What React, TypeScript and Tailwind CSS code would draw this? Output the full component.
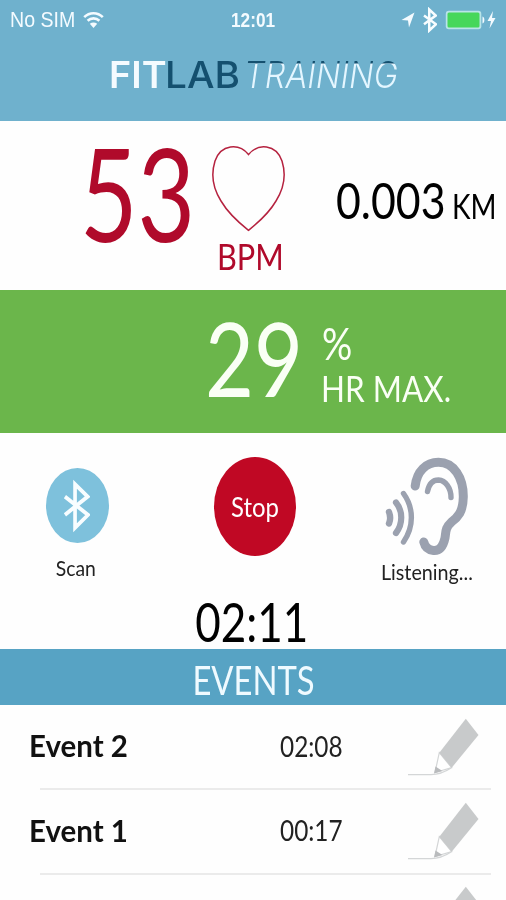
import React from 'react';

interface EventItem {
  name: string;
  time: string;
}

const events: EventItem[] = [
  { name: 'Event 2', time: '02:08' },
  { name: 'Event 1', time: '00:17' },
];

const WifiIcon = () => (
  <svg className="w-[21px] h-[18px]" viewBox="0 0 21 18" fill="none" stroke="#f4fbff" strokeWidth="2.6">
    <path d="M1.2 6.2C6.4 1 14.6 1 19.8 6.2" />
    <path d="M4.6 9.8C8 6.6 13 6.6 16.4 9.8" />
    <path d="M10.5 17L6.8 12.8C9 11 12 11 14.2 12.8Z" fill="#f4fbff" stroke="none" />
  </svg>
);

const LocationIcon = () => (
  <svg className="w-[14px] h-[16px]" viewBox="0 0 14 16" fill="#f4fbff">
    <path d="M13.5 0.5L8 15.5L7 8.6L0.5 8Z" />
  </svg>
);

const BluetoothIcon = ({ className }: { className: string }) => (
  <svg className={className} viewBox="0 0 28 52" fill="none" stroke="#f8fdff" preserveAspectRatio="none">
    <path d="M2 17L26 34.5L12.5 47V5L25.5 17L2 34.5" />
  </svg>
);

const BatteryIcon = () => (
  <svg className="w-[51px] h-[20px]" viewBox="0 0 51 20">
    <rect x="0.8" y="0.8" width="35.5" height="18.4" rx="3" fill="#b9e4e8" />
    <rect x="2.5" y="2.5" width="32" height="15" rx="1.5" fill="#46d75b" />
    <path d="M37.5 6.5C40 7 40 13 37.5 13.5Z" fill="#f4fbff" />
    <path d="M48 1L42.5 11H46L44.5 18.5L50.5 8H47Z" fill="#f4fbff" />
  </svg>
);

const HeartIcon = () => (
  <svg className="w-[76px] h-[88px]" viewBox="211 144 76 88" fill="none" stroke="#b5223f" strokeWidth="1.5">
    <path d="M248.5 154.5C239 143 221 144 215 161C210 177 214 190 221 201C228 213 238 222 248.5 230.3C259 222 269 213 276 201C283 190 287 177 282 161C276 144 258 143 248.5 154.5Z" />
  </svg>
);

const EarIcon = () => (
  <svg className="w-[88px] h-[102px]" viewBox="384 456 88 102" fill="none" stroke="#9ba1af" strokeLinecap="round">
    <path strokeWidth="9" d="M416.2 486C418 471 427 462.5 439.5 462.3C455 462.3 464.5 478 464.3 497C464 512 459 517 452.5 522C446 528 447 532 446 538C444 547 440 551 434.5 550.5C429 550 426 547 424.8 542" />
    <path strokeWidth="5.4" d="M428.5 491.5C430 484 434 480 439.5 480C446.5 480.5 452 488 452 497.5" />
    <path strokeWidth="6.4" d="M390 512C391.5 516 391.5 520 390 523.5" />
    <path strokeWidth="6.2" d="M397 502.5C404 511 404 524 397 533" />
    <path strokeWidth="5.4" d="M404.5 493.5C415 508 415 527 404.5 542" />
  </svg>
);

const PencilIcon = () => (
  <svg className="w-[74px] h-[60px]" viewBox="406 716 74 60">
    <path d="M439.3 751.7L435 771.5L451.7 766.7Z" fill="#fff" stroke="#d4d6d7" strokeWidth="1.2" />
    <path d="M465.8 717.7L478.5 734L451.7 766.7L439.3 751.7Z" fill="#c8cacb" />
    <path d="M435.5 765.5L442.5 770L434 772.5Z" fill="#b9bbbd" />
    <path d="M408 773.6H431C438 773.6 445 771 451 767" fill="none" stroke="#d4d6d7" strokeWidth="1.4" />
  </svg>
);

const Header = () => (
  <header className="h-[121px] bg-[#6fb1cd] text-[#f4fbff]">
    <div className="flex h-10 items-center font-['Liberation_Sans',sans-serif]">
      <div className="ml-[10px] w-[73px]">
        <span className="inline-block origin-left scale-x-[0.89] whitespace-nowrap text-[22px] leading-10">No SIM</span>
      </div>
      <WifiIcon />
      <div className="ml-[127px] w-[44px]">
        <span className="inline-block origin-left scale-x-[0.82] whitespace-nowrap text-[21px] font-bold leading-10">12:01</span>
      </div>
      <div className="ml-[126px] flex items-center">
        <LocationIcon />
        <BluetoothIcon className="ml-[8px] h-[26px] w-[14px] stroke-[5]" />
        <span className="ml-[8px]"><BatteryIcon /></span>
      </div>
    </div>
    <h1 className="ml-[109px] mt-[16px] flex font-['Inter',sans-serif] text-[37px] leading-[37px]">
      <span className="w-[56px]">
        <span className="inline-block origin-left scale-x-[1.02] font-semibold">FIT</span>
      </span>
      <span className="w-[79px] text-[#14506f]">
        <span className="inline-block origin-left scale-x-[1.05] font-medium">LAB</span>
      </span>
      <span className="w-[152px]">
        <span className="inline-block origin-left scale-x-[0.88] bg-linear-to-b from-[#14506f] from-[7px] to-[#e4f6ff] to-[8px] bg-clip-text font-light italic text-transparent">TRAINING</span>
      </span>
    </h1>
  </header>
);

const HeartRate = () => (
  <section className="flex h-[169px]">
    <div className="ml-[80px] w-[131px] pt-[7px] text-[#b00a2b]">
      <span className="inline-block origin-left scale-x-[0.77] text-[129px] leading-none">53</span>
    </div>
    <div className="flex w-[76px] flex-col pt-[23px] text-[#b00a2b]">
      <HeartIcon />
      <span className="ml-[6px] mt-[5px] inline-block origin-left scale-x-[0.83] text-[37px] leading-none">BPM</span>
    </div>
    <div className="ml-[49px] flex items-baseline pt-[53px] text-black">
      <div className="w-[116px]">
        <span className="inline-block origin-left scale-x-[0.84] text-[51px] leading-none">0.003</span>
      </div>
      <span className="inline-block origin-left scale-x-[0.8] text-[35px] leading-none">KM</span>
    </div>
  </section>
);

const MaxRate = () => (
  <section className="flex h-[143px] bg-[#6bb64b] text-[#fafff5]">
    <div className="ml-[205px] w-[116px] pt-[16px]">
      <span className="inline-block origin-left scale-x-[0.82] text-[103px] leading-none">29</span>
    </div>
    <div className="flex flex-col items-start pt-[31px]">
      <span className="ml-px origin-left scale-x-[0.84] text-[45px] leading-none">%</span>
      <span className="mt-[3px] origin-left scale-x-[0.85] whitespace-nowrap text-[37px] leading-none">HR MAX.</span>
    </div>
  </section>
);

const Controls = () => (
  <section className="h-[216px] pt-[23px] text-[#222]">
    <div className="flex h-[137px]">
      <div className="ml-[46px] flex w-[63px] flex-col items-center pt-[12px]">
        <button className="flex h-[75px] w-[63px] items-center justify-center rounded-[50%] bg-[#7ec1dc]">
          <BluetoothIcon className="mr-[3px] h-[54px] w-[27px] stroke-[3.8]" />
        </button>
        <span className="mr-[3px] mt-[14px] scale-x-[0.88] text-[22px] leading-none">Scan</span>
      </div>
      <button className="ml-[105px] mt-px flex h-[99px] w-[82px] items-center justify-center rounded-[50%] bg-[#c00824] text-white">
        <span className="scale-x-[0.92] text-[26px] leading-none">Stop</span>
      </button>
      <div className="ml-[84px] flex w-[94px] flex-col items-center">
        <EarIcon />
        <span className="mt-[3px] scale-x-[0.94] text-[21px] leading-none">Listening...</span>
      </div>
    </div>
    <div className="flex justify-center pr-[2px] text-black">
      <span className="scale-x-[0.8] text-[55px] leading-[57px]">02:11</span>
    </div>
  </section>
);

const EventRow: React.FC<EventItem> = ({ name, time }) => (
  <li className="h-[84.5px]">
    <div className="flex h-[83px] items-center">
      <div className="ml-[29px] w-[251px]">
        <span className="inline-block origin-left scale-x-[0.95] text-[31px] font-bold leading-none text-[#111]">{name}</span>
      </div>
      <div className="w-[126px]">
        <span className="inline-block origin-left scale-x-[0.84] text-[29px] leading-none text-[#222]">{time}</span>
      </div>
      <PencilIcon />
    </div>
    <div className="ml-[40px] mr-[15px] h-[2px] bg-[#ebebeb]" />
  </li>
);

const App = () => {
  return (
    <div className="h-screen w-[506px] overflow-hidden bg-[#fefefe] font-['Lato',sans-serif]">
      <Header />
      <HeartRate />
      <MaxRate />
      <Controls />
      <h2 className="flex h-[56px] items-center justify-center bg-[#57a3c4] pl-[2px] pt-[5px] text-[#effaff]">
        <span className="scale-x-[0.82] text-[40px] leading-none">EVENTS</span>
      </h2>
      <ul>
        {events.map((event) => (
          <EventRow key={event.name} {...event} />
        ))}
        <li className="flex justify-end pr-[26px] pt-[11px]">
          <PencilIcon />
        </li>
      </ul>
    </div>
  );
};

export default App;
